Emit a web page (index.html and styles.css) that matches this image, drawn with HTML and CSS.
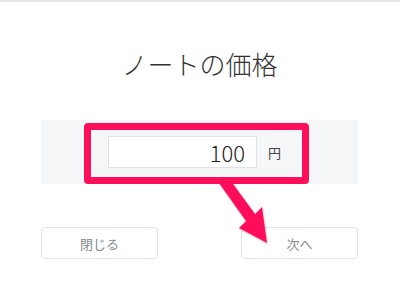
FILE: index.html
```html
<!DOCTYPE html>
<html lang="ja">

<head>
  <meta charset="UTF-8" />
  <meta name="viewport" content="width=device-width, initial-scale=1.0" />
  <title>ノートの価格</title>
  <link rel="stylesheet" href="styles.css">
</head>

<body>
  <div id="dialog">
    <h1 class="title">ノートの価格</h1>

    <div class="price-panel">
      <div class="highlight">
        <input type="text" id="price-input" value="100" />
        <span class="unit">円</span>
      </div>
    </div>

    <div class="actions">
      <button class="btn">閉じる</button>
      <button class="btn">次へ</button>
    </div>

    <!-- annotation arrow -->
    <svg class="arrow" width="400" height="303" viewBox="0 0 400 303">
      <defs>
        <filter id="shadow" x="-20%" y="-20%" width="140%" height="140%">
          <feDropShadow dx="0.5" dy="1" stdDeviation="1" flood-color="#000" flood-opacity="0.25" />
        </filter>
      </defs>
      <polygon points="219,183 228,177 255,214 262,207 267,243 239,228 246,221" fill="#ff0f5b" filter="url(#shadow)" />
    </svg>
  </div>
</body>

</html>
```

FILE: styles.css
```css
body {
  margin: 0;
  padding: 0;
  font-family: "Noto Sans CJK JP", "Liberation Sans", sans-serif;
  background-color: #fff;
}

#dialog {
  position: relative;
  width: 400px;
  height: 303px;
  box-sizing: border-box;
  border-top: 2px solid #e3e7eb;
  padding: 0 42px 0 41px;
}

.title {
  margin: 44px 0 0;
  font-size: 26px;
  line-height: 36px;
  font-weight: 300;
  color: #333;
  text-align: center;
}

.price-panel {
  margin-top: 38px;
  height: 64px;
  box-sizing: border-box;
  padding: 3px 0 0 43px;
  background-color: #f5f6f7;
}

.highlight {
  display: inline-flex;
  align-items: center;
  box-sizing: border-box;
  width: 225px;
  height: 61px;
  padding: 6px 21px 9px 17px;
  border: 7px solid #ff0f5b;
  border-radius: 4px;
}

#price-input {
  box-sizing: border-box;
  width: 149px;
  height: 32px;
  padding: 0 11px 0 0;
  margin: 0 11px 0 0;
  border: 1px solid #dfe2e4;
  background-color: #fff;
  font-family: "Noto Sans CJK JP", "Liberation Sans", sans-serif;
  font-size: 22px;
  font-weight: 300;
  color: #222;
  text-align: right;
  outline: none;
}

.unit {
  font-size: 13px;
  color: #444;
}

.actions {
  margin-top: 43px;
  display: flex;
  justify-content: space-between;
}

.btn {
  width: 117px;
  height: 32px;
  padding: 0;
  border: 1.5px solid #e2e5e7;
  border-radius: 4px;
  background-color: #fff;
  font-family: "Noto Sans CJK JP", sans-serif;
  font-size: 13px;
  color: #868d91;
  cursor: pointer;
}

.arrow {
  position: absolute;
  left: 0;
  top: -2px;
  pointer-events: none;
}
```
